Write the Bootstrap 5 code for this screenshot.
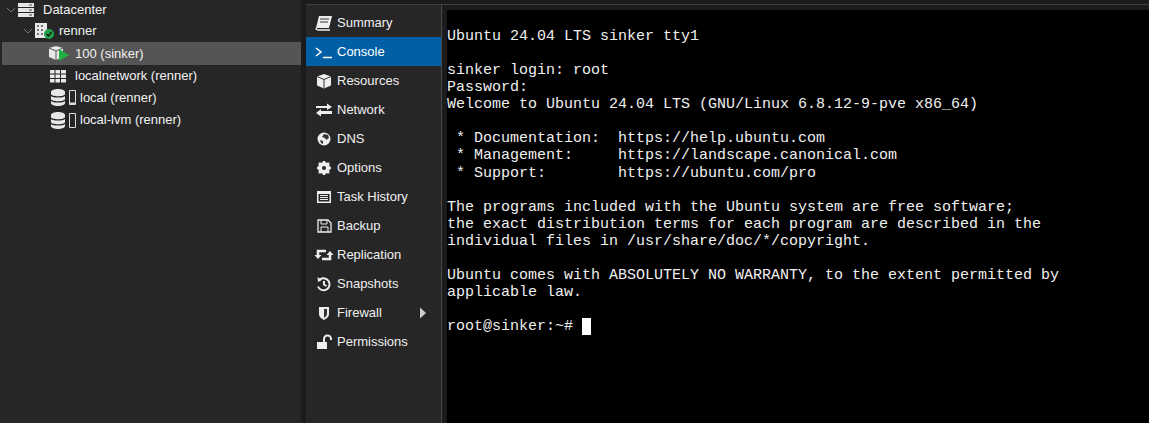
<!doctype html>
<html lang="en">
<head>
<meta charset="utf-8">
<title>Console</title>
<link href="https://cdn.jsdelivr.net/npm/bootstrap@5.3.0/dist/css/bootstrap.min.css" rel="stylesheet">
<style>
html,body{height:100%;background:#1b1b1b;overflow:hidden}
body{font-family:"Liberation Sans",Arial,sans-serif;font-size:13px;color:#f2f2f2}
.shell{height:423px}
.treepane{width:301px;background:#262626;flex:none;padding-top:0}
.gutter{width:5px;background:#1b1b1b;flex:none}
.mainpane{border-top:1px solid #3f3f3f;margin-top:4px;background:#262626;min-width:0}
.menupane{width:135px;flex:none;padding-top:3px;background:#262626}
.menuitem{height:29px;padding-left:8px;gap:3px;color:#f0f0f0;white-space:nowrap}
.menuitem.sel{background:#005fa5;color:#fff}
.menuicon{width:20px;height:16px;flex:none;display:block}
.divider{width:1px;background:#4a4a4a;flex:none}
.termouter{background:#1b1b1b;padding:5px 0 0 5px;min-width:0}
.termpane{background:#000;height:100%;padding-top:18px}
.termtext{font-family:"Liberation Mono","Courier New",monospace;font-size:15px;line-height:17.06px;color:#f0f0f0;margin:0;overflow:hidden;white-space:pre}
.cursorbox{display:inline-block;width:9px;height:17px;background:#fff;vertical-align:top}
.treerow{height:22.25px;white-space:nowrap;color:#f2f2f2}
.treerow.firstrow{height:20px}
.treerow.sel{background:#555;margin-left:2px}
.chev{width:10px;height:10px;flex:none;display:block;margin-right:1px}
.ti{display:block;flex:none}
.d0{padding-left:6px}
.d1{padding-left:23px}
.d2{padding-left:46px}
.tl{margin-left:8px}
.tl5{margin-left:5px}
.tl3{margin-left:3px}
.tl9{margin-left:9px}
.d3{padding-left:50px}
.d4{padding-left:51px}
</style>
</head>
<body>
<div class="shell d-flex">
  <div class="treepane">
    <div class="treerow firstrow d-flex align-items-center d0">
      <svg class="chev" viewBox="0 0 10 10"><path d="M1 3l4 4 4-4" fill="none" stroke="#777" stroke-width="1"/></svg>
      <svg class="ti" width="18" height="16" viewBox="0 0 18 16"><path fill="#e6e6e6" d="M1 1h16v4H1zM1 6h16v4H1zM1 11h16v4H1z"/><path fill="#444" d="M12 2.500h3v1h-3zM12 7.500h3v1h-3zM12 12.500h3v1h-3z"/></svg>
      <span class="tl">Datacenter</span>
    </div>
    <div class="treerow d-flex align-items-center d1">
      <svg class="chev" viewBox="0 0 10 10"><path d="M1 3l4 4 4-4" fill="none" stroke="#777" stroke-width="1"/></svg>
      <svg class="ti" width="20" height="18" viewBox="0 0 20 18"><path fill="#e8e8e8" d="M1 1h12v15H1z"/><path fill="#777" d="M3 3h2v2H3zM7 3h2v2H7zM3 7h2v2H3zM7 7h2v2H7zM3 11h2v2H3zM7 11h2v2H7z"/><circle cx="15" cy="12" r="5" fill="#21a246"/><path d="M12.500 12l2 2 3-4" fill="none" stroke="#111" stroke-width="1.300"/></svg>
      <span class="tl5">renner</span>
    </div>
    <div class="treerow sel d-flex align-items-center d2">
      <svg class="ti" width="22" height="16" viewBox="0 0 22 16"><path fill="#e8e8e8" d="M1 3l7-2 7 2v9l-7 3-7-3z"/><path fill="none" stroke="#555" d="M1 3l7 3 7-3M8 6v9"/><path fill="#1fb141" d="M11 4l10 6-10 6z"/></svg>
      <span class="tl5">100 (sinker)</span>
    </div>
    <div class="treerow d-flex align-items-center d3">
      <svg class="ti" width="16" height="14" viewBox="0 0 16 14"><path fill="#e8e8e8" d="M0 1h4.500v3.500H0zM5.500 1H10v3.500H5.500zM11 1h5v3.500h-5zM0 5.500h4.500V9H0zM5.500 5.500H10V9H5.500zM11 5.500h5V9h-5zM0 10h4.500v3.500H0zM5.500 10H10v3.500H5.500zM11 10h5v3.500h-5z"/></svg>
      <span class="tl9">localnetwork (renner)</span>
    </div>
    <div class="treerow d-flex align-items-center d4">
      <svg class="ti" width="26" height="17" viewBox="0 0 26 17"><path fill="#e8e8e8" d="M0 3c0-4 14-4 14 0v2c0 3-14 3-14 0zM0 7c2 2 12 2 14 0v3c0 3-14 3-14 0zM0 12c2 2 12 2 14 0v2c0 4-14 4-14 0z"/><path fill="none" stroke="#ddd" d="M18.500 1.500h6v14h-6z"/><path stroke="#ddd" stroke-width="2" d="M18.500 14.500h6"/></svg>
      <span class="tl3">local (renner)</span>
    </div>
    <div class="treerow d-flex align-items-center d4">
      <svg class="ti" width="26" height="17" viewBox="0 0 26 17"><path fill="#e8e8e8" d="M0 3c0-4 14-4 14 0v2c0 3-14 3-14 0zM0 7c2 2 12 2 14 0v3c0 3-14 3-14 0zM0 12c2 2 12 2 14 0v2c0 4-14 4-14 0z"/><path fill="none" stroke="#ddd" d="M18.500 1.500h6v14h-6z"/></svg>
      <span class="tl3">local-lvm (renner)</span>
    </div>
  </div>
  <div class="gutter"></div>
  <div class="mainpane flex-grow-1 d-flex">
    <div class="menupane">
      <div class="menuitem d-flex align-items-center"><svg class="menuicon" viewBox="0 0 20 16"><path fill="#eee" d="M5 1h13l-3 12H2z"/><path fill="none" stroke="#eee" stroke-width="1.500" d="M2 13c0 2 1 2 3 2h11"/><path stroke="#333" d="M6 4h9M6 7h8"/></svg><span>Summary</span></div>
      <div class="menuitem sel d-flex align-items-center"><svg class="menuicon" viewBox="0 0 20 16"><path fill="none" stroke="#fff" stroke-width="1.500" d="M2 4l5 4-5 4M9 13.500h9"/></svg><span>Console</span></div>
      <div class="menuitem d-flex align-items-center"><svg class="menuicon" viewBox="0 0 20 16"><path fill="#eee" d="M3 3.500L10 1l7 2.500v9L10 15.500 3 12.500z"/><path fill="none" stroke="#333" d="M3 3.500L10 6.500l7-3M10 6.500v9"/></svg><span>Resources</span></div>
      <div class="menuitem d-flex align-items-center"><svg class="menuicon" viewBox="0 0 20 16"><path fill="#eee" d="M2 4h11V1.500L18 5l-5 3V6H2zM18 9H7V7L2 11l5 3.500V12h11z"/></svg><span>Network</span></div>
      <div class="menuitem d-flex align-items-center"><svg class="menuicon" viewBox="0 0 20 16"><circle cx="10" cy="8" r="6.500" fill="#eee"/><path fill="#333" d="M10 3l4 1 1 3-3 2-1-2-3-1zM6 9l3 1v3l-2-1z"/></svg><span>DNS</span></div>
      <div class="menuitem d-flex align-items-center"><svg class="menuicon" viewBox="0 0 20 16"><circle cx="10" cy="8" r="4.500" fill="none" stroke="#eee" stroke-width="3"/><path stroke="#eee" stroke-width="2.500" d="M10 1v14M3 8h14M5 3l10 10M15 3L5 13"/><circle cx="10" cy="8" r="2" fill="#262626"/></svg><span>Options</span></div>
      <div class="menuitem d-flex align-items-center"><svg class="menuicon" viewBox="0 0 20 16"><path fill="#eee" d="M3 2h14v12H3z"/><path fill="#262626" d="M4.500 5h11v7.500h-11z"/><path stroke="#eee" d="M6 6.500h8M6 8.500h8M6 10.500h8"/></svg><span>Task History</span></div>
      <div class="menuitem d-flex align-items-center"><svg class="menuicon" viewBox="0 0 20 16"><path fill="none" stroke="#eee" stroke-width="1.300" d="M4 2h10l3 3v9H4z"/><path fill="none" stroke="#eee" d="M7 2v4h6V2M7 14V9h7v5"/></svg><span>Backup</span></div>
      <div class="menuitem d-flex align-items-center"><svg class="menuicon" viewBox="0 0 20 16"><path fill="none" stroke="#eee" stroke-width="2.500" d="M4 9V4h8M16 7v5H8"/><path fill="#eee" d="M0.500 8h7L4 12zM12.500 8h7L16 4z"/></svg><span>Replication</span></div>
      <div class="menuitem d-flex align-items-center"><svg class="menuicon" viewBox="0 0 20 16"><path fill="none" stroke="#eee" stroke-width="2" d="M6 3.500a6 6 0 1 1-2 7M10 5v3.500l2.500 1.500"/><path fill="#eee" d="M3.500 1l4.500 3-4 2z"/></svg><span>Snapshots</span></div>
      <div class="menuitem d-flex align-items-center position-relative"><svg class="menuicon" viewBox="0 0 20 16"><path fill="#eee" d="M5 2h10v7c0 3-3 5-5 6-2-1-5-3-5-6z"/><path fill="#333" d="M10 4h3v5c0 2-2 3-3 4z"/></svg><span>Firewall</span><svg class="position-absolute top-50 translate-middle-y" style="left:113px" width="8" height="11" viewBox="0 0 8 11"><path fill="#ccc" d="M1 0l6 5.500L1 11z"/></svg></div>
      <div class="menuitem d-flex align-items-center"><svg class="menuicon" viewBox="0 0 20 16"><path fill="#eee" d="M3 8h10v7H3z"/><path fill="none" stroke="#eee" stroke-width="2" d="M10 8V5a3.500 3.500 0 0 1 7 0v1"/></svg><span>Permissions</span></div>
    </div>
    <div class="divider"></div>
    <div class="termouter flex-grow-1"><div class="termpane"><pre class="termtext">Ubuntu 24.04 LTS sinker tty1

sinker login: root
Password:
Welcome to Ubuntu 24.04 LTS (GNU/Linux 6.8.12-9-pve x86_64)

 * Documentation:  https://help.ubuntu.com
 * Management:     https://landscape.canonical.com
 * Support:        https://ubuntu.com/pro

The programs included with the Ubuntu system are free software;
the exact distribution terms for each program are described in the
individual files in /usr/share/doc/*/copyright.

Ubuntu comes with ABSOLUTELY NO WARRANTY, to the extent permitted by
applicable law.

root@sinker:~# <span class="cursorbox"></span></pre></div></div>
  </div>
</div>
<script src="https://cdn.jsdelivr.net/npm/bootstrap@5.3.0/dist/js/bootstrap.bundle.min.js"></script>
</body>
</html>
